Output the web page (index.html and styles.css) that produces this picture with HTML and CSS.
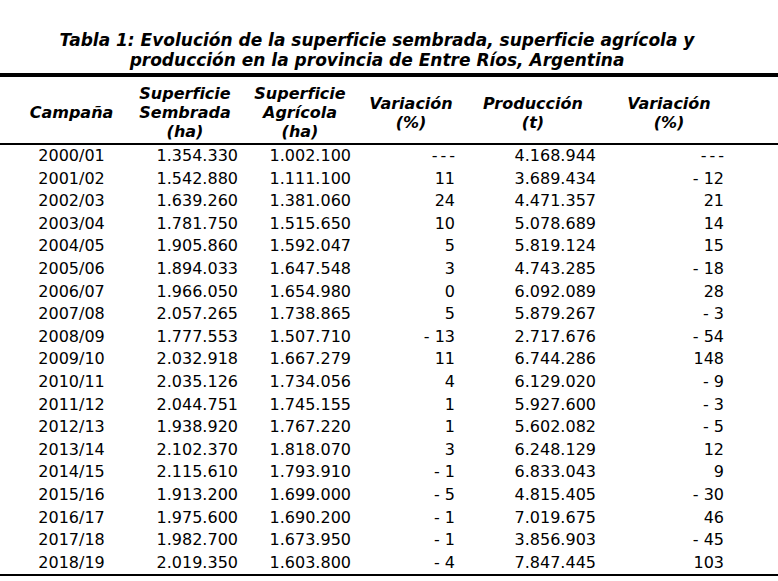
FILE: index.html
```html
<!DOCTYPE html>
<html lang="es">
<head>
<meta charset="utf-8">
<title>Tabla 1</title>
<link rel="stylesheet" href="styles.css">
</head>
<body>
<div class="page">
  <h1 class="caption">Tabla 1: Evolución de la superficie sembrada, superficie agrícola y<br>producción en la provincia de Entre Ríos, Argentina</h1>
  <table class="data">
    <colgroup>
      <col class="c1"><col class="c2"><col class="c3"><col class="c4"><col class="c5"><col class="c6">
    </colgroup>
    <thead>
      <tr>
        <th class="h1">Campaña</th>
        <th class="h2">Superficie<br>Sembrada<br>(ha)</th>
        <th class="h3">Superficie<br>Agrícola<br>(ha)</th>
        <th class="h4">Variación<br>(%)</th>
        <th class="h5">Producción<br>(t)</th>
        <th class="h6">Variación<br>(%)</th>
      </tr>
    </thead>
    <tbody>
      <tr><td>2000/01</td><td>1.354.330</td><td>1.002.100</td><td><span class="dash">---</span></td><td>4.168.944</td><td><span class="dash">---</span></td></tr>
      <tr><td>2001/02</td><td>1.542.880</td><td>1.111.100</td><td>11</td><td>3.689.434</td><td>- 12</td></tr>
      <tr><td>2002/03</td><td>1.639.260</td><td>1.381.060</td><td>24</td><td>4.471.357</td><td>21</td></tr>
      <tr><td>2003/04</td><td>1.781.750</td><td>1.515.650</td><td>10</td><td>5.078.689</td><td>14</td></tr>
      <tr><td>2004/05</td><td>1.905.860</td><td>1.592.047</td><td>5</td><td>5.819.124</td><td>15</td></tr>
      <tr><td>2005/06</td><td>1.894.033</td><td>1.647.548</td><td>3</td><td>4.743.285</td><td>- 18</td></tr>
      <tr><td>2006/07</td><td>1.966.050</td><td>1.654.980</td><td>0</td><td>6.092.089</td><td>28</td></tr>
      <tr><td>2007/08</td><td>2.057.265</td><td>1.738.865</td><td>5</td><td>5.879.267</td><td>- 3</td></tr>
      <tr><td>2008/09</td><td>1.777.553</td><td>1.507.710</td><td>- 13</td><td>2.717.676</td><td>- 54</td></tr>
      <tr><td>2009/10</td><td>2.032.918</td><td>1.667.279</td><td>11</td><td>6.744.286</td><td>148</td></tr>
      <tr><td>2010/11</td><td>2.035.126</td><td>1.734.056</td><td>4</td><td>6.129.020</td><td>- 9</td></tr>
      <tr><td>2011/12</td><td>2.044.751</td><td>1.745.155</td><td>1</td><td>5.927.600</td><td>- 3</td></tr>
      <tr><td>2012/13</td><td>1.938.920</td><td>1.767.220</td><td>1</td><td>5.602.082</td><td>- 5</td></tr>
      <tr><td>2013/14</td><td>2.102.370</td><td>1.818.070</td><td>3</td><td>6.248.129</td><td>12</td></tr>
      <tr><td>2014/15</td><td>2.115.610</td><td>1.793.910</td><td>- 1</td><td>6.833.043</td><td>9</td></tr>
      <tr><td>2015/16</td><td>1.913.200</td><td>1.699.000</td><td>- 5</td><td>4.815.405</td><td>- 30</td></tr>
      <tr><td>2016/17</td><td>1.975.600</td><td>1.690.200</td><td>- 1</td><td>7.019.675</td><td>46</td></tr>
      <tr><td>2017/18</td><td>1.982.700</td><td>1.673.950</td><td>- 1</td><td>3.856.903</td><td>- 45</td></tr>
      <tr><td>2018/19</td><td>2.019.350</td><td>1.603.800</td><td>- 4</td><td>7.847.445</td><td>103</td></tr>
    </tbody>
  </table>
</div>
</body>
</html>
```

FILE: styles.css
```css
html, body {
  margin: 0;
  padding: 0;
  background: #ffffff;
  color: #000000;
}

.page {
  width: 778px;
  padding-top: 30px;
  font-family: "DejaVu Sans", Verdana, sans-serif;
}

.caption {
  margin: 0;
  font-size: 17px;
  font-weight: bold;
  font-style: italic;
  line-height: 20px;
  text-align: center;
  padding: 0 24px 3px 0;
  border-bottom: 4px solid #000;
}

.data {
  width: 778px;
  border-collapse: collapse;
  table-layout: fixed;
  font-size: 16px;
}

.c1 { width: 130px; }
.c2 { width: 110px; }
.c3 { width: 120px; }
.c4 { width: 110px; }
.c5 { width: 130px; }
.c6 { width: 178px; }

.data th {
  font-weight: bold;
  font-style: italic;
  line-height: 19px;
  text-align: center;
  vertical-align: middle;
  padding: 7px 0 2px 0;
  height: 57px;
  border-bottom: 2px solid #000;
}

.data th.h1 { padding-left: 13px; }
.data th.h4 { padding-right: 8px; }
.data th.h5 { padding-right: 4px; }
.data th.h6 { padding-right: 40px; }

.data td {
  padding: 0;
  height: 22.6px;
  line-height: 22.6px;
  text-align: right;
  white-space: nowrap;
}

.dash {
  letter-spacing: 3px;
  margin-right: -3px;
}

.data tbody tr:last-child td {
  border-bottom: 2px solid #000;
}

.data td:nth-child(1) { text-align: center; padding-left: 13px; }
.data td:nth-child(2) { padding-right: 2px; }
.data td:nth-child(3) { padding-right: 9px; }
.data td:nth-child(4) { padding-right: 15px; }
.data td:nth-child(5) { padding-right: 4px; }
.data td:nth-child(6) { padding-right: 54px; }
```
